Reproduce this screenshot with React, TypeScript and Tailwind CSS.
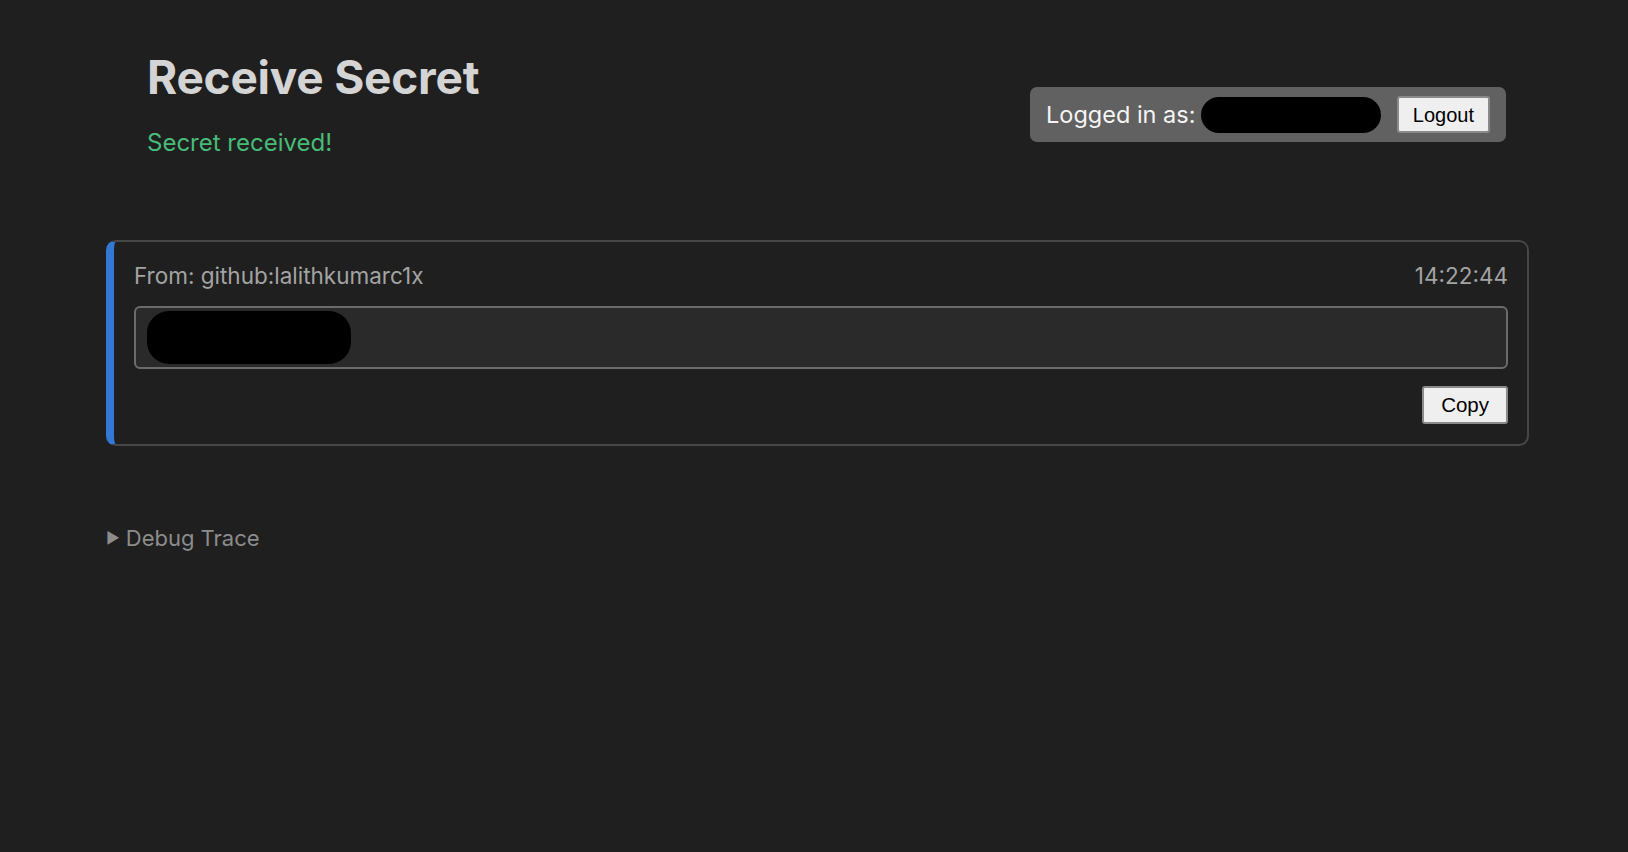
export default function App() {
  return (
    <div className="min-h-screen bg-[#1f1f1f] font-['Inter',sans-serif] pl-[106px] pr-[99px]">
      <header className="flex justify-between pl-[41px] pr-[23px] pt-[50px]">
        <div>
          <h1 className="text-[46px] leading-[54px] font-bold tracking-[-0.005em] text-[#d4d4d4]">Receive Secret</h1>
          <p className="mt-[24px] text-[24px] leading-[30px] text-[#48bb78]">Secret received!</p>
        </div>
        <div className="mt-[37px] flex items-center h-[55px] w-[476px] rounded-[7px] bg-[#616161] pl-[16px] pr-[16px]">
          <span className="text-[23.5px] text-[#f5f5f5] whitespace-nowrap">Logged in as: </span>
          <span className="ml-[6px] h-[36px] w-[180px] rounded-full bg-black"></span>
          <button className="ml-auto h-[37px] px-[14px] rounded-[3px] border-2 border-[#8a8a8a] bg-[#efefef] font-['Liberation_Sans',sans-serif] text-[20px] text-black">
            Logout
          </button>
        </div>
      </header>

      <div className="mt-[82px] rounded-[10px] border-2 border-[#474747] border-l-[8px] border-l-[#3378d4] pl-[20px] pr-[19px] pt-[20px] pb-[20px]">
        <div className="flex justify-between text-[22.5px] leading-[28px] text-[#a3a3a3]">
          <span>From: github:lalithkumarc1x</span>
          <span>14:22:44</span>
        </div>
        <div className="mt-[16px] h-[63px] rounded-[6px] border-2 border-[#6b6b6b] bg-[#2a2a2a] flex items-center px-[11px]">
          <span className="h-[53px] w-[204px] rounded-[22px] bg-black"></span>
        </div>
        <div className="mt-[17px] flex justify-end">
          <button className="h-[38px] px-[17px] rounded-[3px] border-2 border-[#8a8a8a] bg-[#efefef] font-['Liberation_Sans',sans-serif] text-[20.5px] text-black">
            Copy
          </button>
        </div>
      </div>

      <div className="mt-[76px] flex items-center gap-[6px] text-[22px] text-[#8c8c8c]">
        <span className="text-[15px]">▶</span>
        <span>Debug Trace</span>
      </div>
    </div>
  );
}
